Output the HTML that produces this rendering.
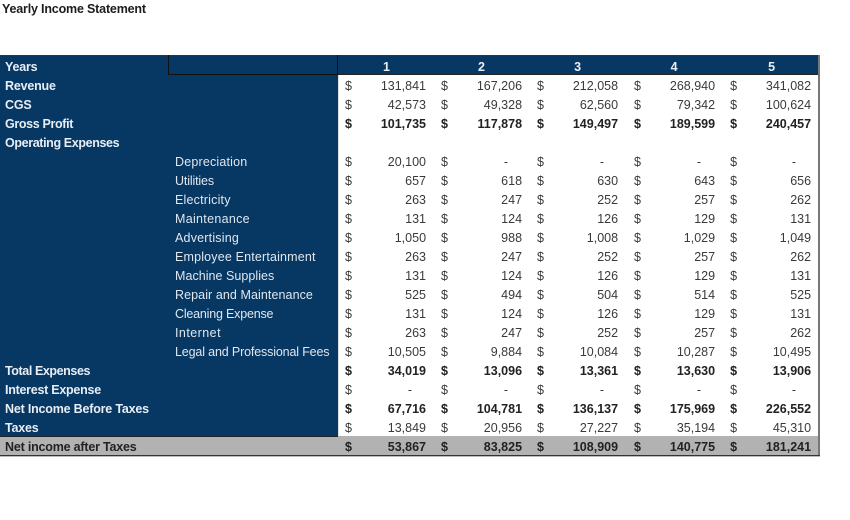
<!DOCTYPE html>
<html><head><meta charset="utf-8"><style>
html,body{margin:0;padding:0;background:#fff;width:850px;height:520px;overflow:hidden}
body{font-family:"Liberation Sans",sans-serif;font-size:12.5px;color:#3a3a3a;position:relative}
#t{position:absolute;left:2px;top:2px;font-weight:bold;color:#1c1c1c;font-size:12.5px;line-height:14px;letter-spacing:-.18px}
table{position:absolute;left:0;top:56px;width:819px;table-layout:fixed;border-collapse:collapse}
td{height:19px;padding:4px 0 0 0;line-height:15px;white-space:nowrap;overflow:visible;box-sizing:border-box}
.l{background:#073763;color:#e8eef4;padding-left:5px;letter-spacing:-.2px}
.s{background:#073763;color:#dfe7ef;padding-left:7px;letter-spacing:-.15px}
.b{font-weight:bold}
.d{text-align:left}
.n{text-align:right;padding-right:6px}
.z{padding-right:20px!important}
.y{padding-right:23px!important}
.e{padding-right:8px}
tr.h td{background:#073763;color:#e8eef4;font-weight:bold}
tr.h .c{text-align:center;padding-left:3px}
tr.g td{background:#b2b2b2;color:#222;font-weight:bold}
tr.f td{color:#222;font-weight:bold}
tr.g td.lg{padding-left:5px;letter-spacing:-.2px}
tr.f td.l{color:#e8eef4}
.d1{padding-left:7px}.d2{padding-left:9px}.d4{padding-left:10px}
#top{position:absolute;left:0;top:55px;width:819px;height:1px;background:#333}
#rb{position:absolute;left:818px;top:55px;width:2px;height:402px;background:#777}
#bb{position:absolute;left:0;top:455px;width:820px;height:1px;background:#333}
#bb2{position:absolute;left:0;top:456px;width:820px;height:1px;background:#bbb}
#lb{position:absolute;left:0;top:436px;width:338px;height:1px;background:#222}
#b1{position:absolute;left:168px;top:55px;width:1px;height:20px;background:#111}
#b2{position:absolute;left:168px;top:74px;width:170px;height:1px;background:#111}
#b3{position:absolute;left:337px;top:55px;width:1px;height:20px;background:#111}
#b4{position:absolute;left:338px;top:74px;width:481px;height:1px;background:#222}
#b5{position:absolute;left:338px;top:75px;width:1px;height:361px;background:#ddd}
</style></head><body>
<div id="t">Yearly Income Statement</div>
<table>
<colgroup><col style="width:168px"><col style="width:170px"><col style="width:20px"><col style="width:74px"><col style="width:20px"><col style="width:76px"><col style="width:20px"><col style="width:76px"><col style="width:20px"><col style="width:77px"><col style="width:20px"><col style="width:78px"></colgroup>
<tr class="h"><td class="l">Years</td><td></td><td colspan="2" class="c">1</td><td colspan="2" class="c">2</td><td colspan="2" class="c">3</td><td colspan="2" class="c">4</td><td colspan="2" class="c">5</td></tr>
<tr><td class="l b">Revenue</td><td class="s"></td><td class="d d1">$</td><td class="n">131,841</td><td class="d d2">$</td><td class="n">167,206</td><td class="d d2">$</td><td class="n">212,058</td><td class="d d4">$</td><td class="n">268,940</td><td class="d d2">$</td><td class="n e">341,082</td></tr>
<tr><td class="l b">CGS</td><td class="s"></td><td class="d d1">$</td><td class="n">42,573</td><td class="d d2">$</td><td class="n">49,328</td><td class="d d2">$</td><td class="n">62,560</td><td class="d d4">$</td><td class="n">79,342</td><td class="d d2">$</td><td class="n e">100,624</td></tr>
<tr class="f"><td class="l b" style="letter-spacing:-.35px">Gross Profit</td><td class="s"></td><td class="d d1">$</td><td class="n">101,735</td><td class="d d2">$</td><td class="n">117,878</td><td class="d d2">$</td><td class="n">149,497</td><td class="d d4">$</td><td class="n">189,599</td><td class="d d2">$</td><td class="n e">240,457</td></tr>
<tr><td class="l b" style="letter-spacing:-.37px">Operating Expenses</td><td class="s"></td><td></td><td></td><td></td><td></td><td></td><td></td><td></td><td></td><td></td><td></td></tr>
<tr><td class="l"></td><td class="s" style="letter-spacing:.18px">Depreciation</td><td class="d d1">$</td><td class="n">20,100</td><td class="d d2">$</td><td class="n z">-</td><td class="d d2">$</td><td class="n z">-</td><td class="d d4">$</td><td class="n z">-</td><td class="d d2">$</td><td class="n y">-</td></tr>
<tr><td class="l"></td><td class="s">Utilities</td><td class="d d1">$</td><td class="n">657</td><td class="d d2">$</td><td class="n">618</td><td class="d d2">$</td><td class="n">630</td><td class="d d4">$</td><td class="n">643</td><td class="d d2">$</td><td class="n e">656</td></tr>
<tr><td class="l"></td><td class="s" style="letter-spacing:.2px">Electricity</td><td class="d d1">$</td><td class="n">263</td><td class="d d2">$</td><td class="n">247</td><td class="d d2">$</td><td class="n">252</td><td class="d d4">$</td><td class="n">257</td><td class="d d2">$</td><td class="n e">262</td></tr>
<tr><td class="l"></td><td class="s" style="letter-spacing:.3px">Maintenance</td><td class="d d1">$</td><td class="n">131</td><td class="d d2">$</td><td class="n">124</td><td class="d d2">$</td><td class="n">126</td><td class="d d4">$</td><td class="n">129</td><td class="d d2">$</td><td class="n e">131</td></tr>
<tr><td class="l"></td><td class="s" style="letter-spacing:.2px">Advertising</td><td class="d d1">$</td><td class="n">1,050</td><td class="d d2">$</td><td class="n">988</td><td class="d d2">$</td><td class="n">1,008</td><td class="d d4">$</td><td class="n">1,029</td><td class="d d2">$</td><td class="n e">1,049</td></tr>
<tr><td class="l"></td><td class="s" style="letter-spacing:.17px">Employee Entertainment</td><td class="d d1">$</td><td class="n">263</td><td class="d d2">$</td><td class="n">247</td><td class="d d2">$</td><td class="n">252</td><td class="d d4">$</td><td class="n">257</td><td class="d d2">$</td><td class="n e">262</td></tr>
<tr><td class="l"></td><td class="s" style="letter-spacing:.04px">Machine Supplies</td><td class="d d1">$</td><td class="n">131</td><td class="d d2">$</td><td class="n">124</td><td class="d d2">$</td><td class="n">126</td><td class="d d4">$</td><td class="n">129</td><td class="d d2">$</td><td class="n e">131</td></tr>
<tr><td class="l"></td><td class="s" style="letter-spacing:.08px">Repair and Maintenance</td><td class="d d1">$</td><td class="n">525</td><td class="d d2">$</td><td class="n">494</td><td class="d d2">$</td><td class="n">504</td><td class="d d4">$</td><td class="n">514</td><td class="d d2">$</td><td class="n e">525</td></tr>
<tr><td class="l"></td><td class="s" style="letter-spacing:-.2px">Cleaning Expense</td><td class="d d1">$</td><td class="n">131</td><td class="d d2">$</td><td class="n">124</td><td class="d d2">$</td><td class="n">126</td><td class="d d4">$</td><td class="n">129</td><td class="d d2">$</td><td class="n e">131</td></tr>
<tr><td class="l"></td><td class="s" style="letter-spacing:.45px">Internet</td><td class="d d1">$</td><td class="n">263</td><td class="d d2">$</td><td class="n">247</td><td class="d d2">$</td><td class="n">252</td><td class="d d4">$</td><td class="n">257</td><td class="d d2">$</td><td class="n e">262</td></tr>
<tr><td class="l"></td><td class="s">Legal and Professional Fees</td><td class="d d1">$</td><td class="n">10,505</td><td class="d d2">$</td><td class="n">9,884</td><td class="d d2">$</td><td class="n">10,084</td><td class="d d4">$</td><td class="n">10,287</td><td class="d d2">$</td><td class="n e">10,495</td></tr>
<tr class="f"><td class="l b" style="letter-spacing:-.41px">Total Expenses</td><td class="s"></td><td class="d d1">$</td><td class="n">34,019</td><td class="d d2">$</td><td class="n">13,096</td><td class="d d2">$</td><td class="n">13,361</td><td class="d d4">$</td><td class="n">13,630</td><td class="d d2">$</td><td class="n e">13,906</td></tr>
<tr><td class="l b" style="letter-spacing:-.26px">Interest Expense</td><td class="s"></td><td class="d d1">$</td><td class="n z">-</td><td class="d d2">$</td><td class="n z">-</td><td class="d d2">$</td><td class="n z">-</td><td class="d d4">$</td><td class="n z">-</td><td class="d d2">$</td><td class="n y">-</td></tr>
<tr class="f"><td class="l b">Net Income Before Taxes</td><td class="s"></td><td class="d d1">$</td><td class="n">67,716</td><td class="d d2">$</td><td class="n">104,781</td><td class="d d2">$</td><td class="n">136,137</td><td class="d d4">$</td><td class="n">175,969</td><td class="d d2">$</td><td class="n e">226,552</td></tr>
<tr><td class="l b">Taxes</td><td class="s"></td><td class="d d1">$</td><td class="n">13,849</td><td class="d d2">$</td><td class="n">20,956</td><td class="d d2">$</td><td class="n">27,227</td><td class="d d4">$</td><td class="n">35,194</td><td class="d d2">$</td><td class="n e">45,310</td></tr>
<tr class="g"><td class="lg">Net income after Taxes</td><td></td><td class="d d1">$</td><td class="n">53,867</td><td class="d d2">$</td><td class="n">83,825</td><td class="d d2">$</td><td class="n">108,909</td><td class="d d4">$</td><td class="n">140,775</td><td class="d d2">$</td><td class="n e">181,241</td></tr>
</table>
<div id="top"></div><div id="b1"></div><div id="b2"></div><div id="b3"></div><div id="b4"></div><div id="b5"></div><div id="lb"></div><div id="rb"></div><div id="bb"></div><div id="bb2"></div>
</body></html>
